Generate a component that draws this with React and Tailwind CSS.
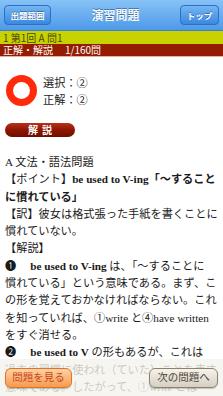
export default function App() {
  const jp = { fontFamily: '"Liberation Serif", "Noto Sans CJK JP", serif' };
  const sans = { fontFamily: '"Noto Sans CJK JP", "Liberation Sans", sans-serif' };
  return (
    <div className="relative w-[223px] h-[396px] overflow-hidden bg-white" style={sans}>
      {/* Header */}
      <div className="h-[31px] flex items-center justify-between px-[4px] bg-gradient-to-b from-[#86c2f6] to-[#4d9ae9] border-b border-[#3a7fd0]">
        <div className="w-[47px] h-[20px] rounded-[4px] border border-[#2f6fc0] bg-gradient-to-b from-[#74b6f4] to-[#3b88e0] flex items-center justify-center text-white text-[8.5px] font-bold leading-none [text-shadow:0_-1px_0_rgba(0,0,0,0.35)]">
          出題範囲
        </div>
        <div className="text-[#f4f8ff] text-[12px] font-bold leading-none [text-shadow:0_-1px_0_rgba(0,0,0,0.35)]">
          演習問題
        </div>
        <div className="w-[39px] h-[20px] rounded-[4px] border border-[#2f6fc0] bg-gradient-to-b from-[#74b6f4] to-[#3b88e0] flex items-center justify-center text-white text-[8.5px] font-bold leading-none [text-shadow:0_-1px_0_rgba(0,0,0,0.35)]">
          トップ
        </div>
      </div>
      {/* Yellow bar */}
      <div className="h-[13px] bg-[#c8d200] flex items-center px-[3px] text-[10px] leading-none text-[#4a4a10]">
        1 第1回 A 問1
      </div>
      {/* Red bar */}
      <div className="h-[13px] bg-[#931c02] flex items-center px-[3px] text-[10px] leading-none text-white border-b border-[#e8b0a0]">
        <span>正解・解説</span>
        <span className="ml-[12px]">1/160問</span>
      </div>

      {/* Content */}
      <div className="px-[5px]" style={jp}>
        <div className="flex items-center mt-[17px]">
          <div className="w-[31px] h-[31px] rounded-full border-[7px] border-[#ff2a0a] ml-[1px]"></div>
          <div className="ml-[6px] flex flex-col text-[11.2px] leading-[16.5px] text-[#222]" style={sans}>
            <span>選択：②</span>
            <span>正解：②</span>
          </div>
        </div>
        <div className="mt-[16px] w-[70px] h-[14px] rounded-full bg-gradient-to-b from-[#b8321a] via-[#8e1602] to-[#6e0e00] flex items-center justify-center text-white text-[10px] font-bold leading-none tracking-[4px] pl-[4px]" style={sans}>
          解説
        </div>

        <div className="mt-[17px] text-[11.2px] leading-[17.3px] text-[#1a1a1a] whitespace-nowrap">
          <div>A 文法・語法問題</div>
          <div>
            【ポイント】<b>be used to V-ing</b><b>「〜すること</b>
          </div>
          <div><b>に慣れている」</b></div>
          <div>【訳】彼女は格式張った手紙を書くことに</div>
          <div>慣れていない。</div>
          <div>【解説】</div>
          <div>
            <span>❶</span><span className="inline-block w-[14px]"></span><b>be used to V-ing</b> は、「〜することに
          </div>
          <div>慣れている」という意味である。まず、こ</div>
          <div>の形を覚えておかなければならない。これ</div>
          <div>を知っていれば、①write と④have written</div>
          <div>をすぐ消せる。</div>
          <div>
            <span>❷</span><span className="inline-block w-[14px]"></span><b>be used to V</b> の形もあるが、これは
          </div>
          <div>過去の習慣に使われ（ていた）ことを表す</div>
          <div>意味である。したがって、①write とは</div>
        </div>
      </div>

      {/* Bottom toolbar overlay */}
      <div className="absolute left-0 right-0 bottom-0 h-[37px] bg-[#f4f2ec]/80 flex items-center justify-between px-[5px]" style={sans}>
        <div className="w-[67px] h-[20px] rounded-[6px] border border-[#e0752a] bg-gradient-to-b from-[#fdd2a4] to-[#f59a4e] flex items-center justify-center text-[#c8461a] text-[10.5px] leading-none shadow-[0_1px_1px_rgba(0,0,0,0.2)]">
          問題を見る
        </div>
        <div className="w-[69px] h-[20px] rounded-[6px] border border-[#8c8272] bg-gradient-to-b from-[#f6f3ec] to-[#d6cfc2] flex items-center justify-center text-[#4a4236] text-[10.5px] leading-none shadow-[0_1px_1px_rgba(0,0,0,0.2)]">
          次の問題へ
        </div>
      </div>
    </div>
  );
}
